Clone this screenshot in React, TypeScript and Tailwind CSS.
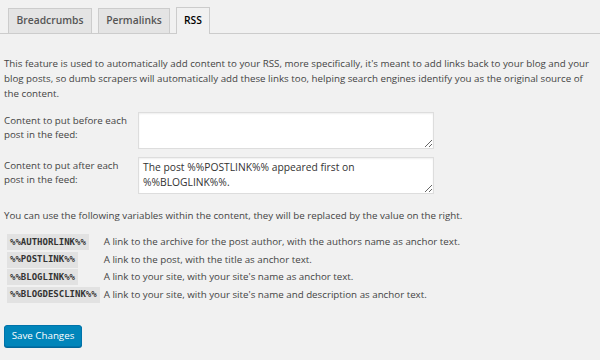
const vars = [
  ["%%AUTHORLINK%%", "A link to the archive for the post author, with the authors name as anchor text."],
  ["%%POSTLINK%%", "A link to the post, with the title as anchor text."],
  ["%%BLOGLINK%%", "A link to your site, with your site's name as anchor text."],
  ["%%BLOGDESCLINK%%", "A link to your site, with your site's name and description as anchor text."],
];

export default function App() {
  return (
    <div className="w-[600px] h-[360px] overflow-hidden bg-[#f1f1f1] font-['Open_Sans',sans-serif] text-[#444]">
      {/* tabs */}
      <div className="flex items-end gap-[6px] pl-[8px] pt-[7px] border-b border-[#ccc]">
        <div className="h-[25px] w-[84px] flex items-center justify-center border border-b-0 border-[#ccc] bg-[#e4e4e4] text-[10.3px] font-semibold text-[#555]">
          Breadcrumbs
        </div>
        <div className="h-[25px] w-[72px] flex items-center justify-center border border-b-0 border-[#ccc] bg-[#e4e4e4] text-[10.3px] font-semibold text-[#555]">
          Permalinks
        </div>
        <div className="h-[27px] w-[34px] mb-[-1px] flex items-center justify-center border border-b-0 border-[#ccc] bg-[#f1f1f1] text-[10.3px] font-semibold text-[#000]">
          RSS
        </div>
      </div>

      <div className="px-[4px]">
        <p className="mt-[23px] text-[9.75px] leading-[14.8px] pr-[6px]">
          This feature is used to automatically add content to your RSS, more specifically, it's meant to add links back to your blog and your blog posts, so dumb scrapers will automatically add these links too, helping search engines identify you as the original source of the content.
        </p>

        <div className="mt-[11px] flex flex-col gap-[8px]">
          <div className="flex">
            <label className="w-[134px] pt-[2px] text-[9.75px] leading-[14px]">
              Content to put before each post in the feed:
            </label>
            <textarea
              className="w-[296px] h-[37px] bg-white border border-[#ddd] shadow-[inset_0_1px_2px_rgba(0,0,0,0.07)] px-[4px] py-[2px] text-[10.3px] leading-[15px] text-[#333] outline-none"
              defaultValue=""
            />
          </div>
          <div className="flex">
            <label className="w-[134px] pt-[2px] text-[9.75px] leading-[14px]">
              Content to put after each post in the feed:
            </label>
            <textarea
              className="w-[296px] h-[37px] bg-white border border-[#ddd] shadow-[inset_0_1px_2px_rgba(0,0,0,0.07)] px-[4px] py-[2px] text-[10.3px] leading-[15px] text-[#333] outline-none"
              defaultValue="The post %%POSTLINK%% appeared first on %%BLOGLINK%%."
            />
          </div>
        </div>

        <p className="mt-[14px] text-[9.75px] leading-[16px]">
          You can use the following variables within the content, they will be replaced by the value on the right.
        </p>

        <div className="mt-[10px] ml-[3px] grid grid-cols-[auto_1fr] gap-x-[4px] gap-y-[1.5px] items-center">
          {vars.map(([code, desc]) => (
            <div key={code} className="contents">
              <div className="flex">
                <code className="bg-[#e2e2e2] px-[3px] h-[16px] flex items-center font-['DejaVu_Sans_Mono',monospace] font-bold text-[9px] text-[#333]">
                  {code}
                </code>
              </div>
              <div className="text-[9.75px] leading-[16px]">{desc}</div>
            </div>
          ))}
        </div>

        <button className="mt-[22px] h-[22px] w-[78px] rounded-[3px] bg-[#0085ba] border border-[#0073aa] shadow-[0_1px_0_#006799] text-white text-[9.75px] flex items-center justify-center">
          Save Changes
        </button>
      </div>
    </div>
  );
}
